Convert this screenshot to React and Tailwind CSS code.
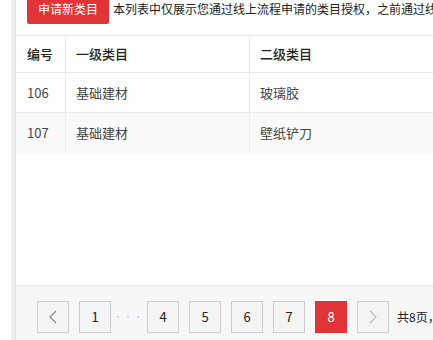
const rows = [
  { id: '106', cat1: '基础建材', cat2: '玻璃胶' },
  { id: '107', cat1: '基础建材', cat2: '壁纸铲刀' },
];

const pages = [1, '...', 4, 5, 6, 7, 8];

export default function App() {
  return (
    <div
      className="flex w-[433px] h-[340px] overflow-hidden bg-white text-[#333]"
      style={{ fontFamily: '"Segoe UI", "Noto Sans CJK SC", sans-serif' }}
    >
      {/* 左侧阴影条 */}
      <div className="w-[11px] shrink-0 bg-white" />
      <div className="w-[5px] shrink-0 bg-gradient-to-r from-[#f4f4f4] to-[#e6e6e6]" />

      <div className="flex flex-col flex-1 min-w-0">
        {/* 顶部操作栏 */}
        <div className="flex items-start h-[35px] pl-[11px]">
          <button className="-mt-[6px] h-[30px] w-[82px] shrink-0 rounded-b-[2px] bg-[#e03436] text-white text-[12px] leading-[30px]">
            申请新类目
          </button>
          <span className="ml-[4px] mt-[1px] whitespace-nowrap text-[12px] leading-[16px] text-[#222]">
            本列表中仅展示您通过线上流程申请的类目授权，之前通过线下申请的类目授权请联系客服查询
          </span>
        </div>

        {/* 表格 */}
        <div className="w-[600px] border-t border-[#ebebeb] text-[13px]">
          <div className="flex h-[37px] items-center border-b border-[#ebebeb] font-medium text-[#222]">
            <div className="w-[50px] h-full flex items-center pl-[11px] border-r border-[#ebebeb]">编号</div>
            <div className="w-[184px] h-full flex items-center pl-[10px] border-r border-[#ebebeb]">一级类目</div>
            <div className="flex-1 h-full flex items-center pl-[10px]">二级类目</div>
          </div>
          {rows.map((r, i) => (
            <div
              key={r.id}
              className={`flex h-[40px] items-center text-[#444] ${i === 0 ? 'border-b border-[#ebebeb] bg-white' : 'bg-[#fafafa]'}`}
            >
              <div className="w-[50px] h-full flex items-center pl-[11px] border-r border-[#ebebeb]">{r.id}</div>
              <div className="w-[184px] h-full flex items-center pl-[10px] border-r border-[#ebebeb]">{r.cat1}</div>
              <div className="flex-1 h-full flex items-center pl-[10px]">{r.cat2}</div>
            </div>
          ))}
        </div>

        <div className="flex-1" />

        {/* 分页 */}
        <div className="h-[55px] shrink-0 border-t border-[#ebebeb] bg-[#f7f7f7] flex items-start pt-[15px] pl-[21px] gap-[10px] text-[13px]">
          <button className="w-[32px] h-[32px] shrink-0 border border-[#cccccc] bg-[#f4f4f4] flex items-center justify-center text-[#888]">
            <svg width="10" height="14" viewBox="0 0 10 14" fill="none" stroke="currentColor" strokeWidth="1.2">
              <path d="M8 1L2 7l6 6" />
            </svg>
          </button>
          {pages.map((p, i) =>
            p === '...' ? (
              <span key={i} className="w-[16px] h-[32px] shrink-0 flex items-center justify-center text-[#bbb] text-[8px] tracking-[2px]">
                ···
              </span>
            ) : (
              <button
                key={i}
                className={`w-[32px] h-[32px] shrink-0 flex items-center justify-center ${
                  p === 8 ? 'bg-[#e03436] text-white border border-[#e03436]' : 'bg-[#f4f4f4] border border-[#cccccc] text-[#222]'
                }`}
              >
                {p}
              </button>
            )
          )}
          <button className="w-[32px] h-[32px] shrink-0 border border-[#cccccc] bg-[#f4f4f4] flex items-center justify-center text-[#bbb]">
            <svg width="10" height="14" viewBox="0 0 10 14" fill="none" stroke="currentColor" strokeWidth="1.2">
              <path d="M2 1l6 6-6 6" />
            </svg>
          </button>
          <span className="h-[32px] shrink-0 flex items-center whitespace-nowrap text-[12px] text-[#222] -ml-[2px]">共8页，</span>
        </div>
      </div>
    </div>
  );
}
